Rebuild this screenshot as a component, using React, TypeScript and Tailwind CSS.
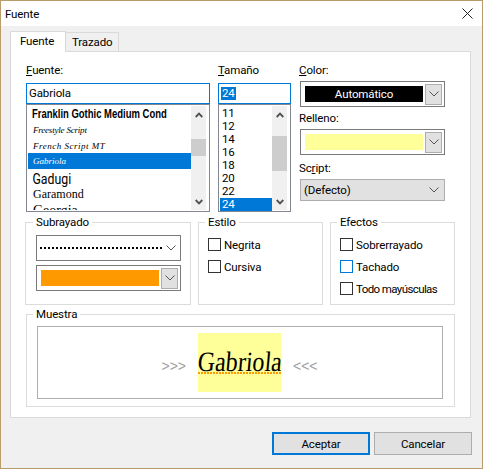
const textFont = "font-['Roboto','Noto_Sans',sans-serif] text-[11.5px] tracking-[-0.12px] leading-[16px] text-black";

function Chevron({ className = "text-[#555]" }: { className?: string }) {
  return (
    <svg width="10" height="6" viewBox="0 0 10 6" className={className} fill="none" stroke="currentColor" strokeWidth="1">
      <path d="M0.5 0.5 L5 5 L9.5 0.5" />
    </svg>
  );
}

function ScrollArrow({ up }: { up?: boolean }) {
  return (
    <div className="h-[17px] flex items-center justify-center">
      <svg width="8" height="6" viewBox="0 0 8 6" fill="none" stroke="#505050" strokeWidth="1.8">
        <path d={up ? "M0.7 5 L4 1.6 L7.3 5" : "M0.7 1 L4 4.4 L7.3 1"} />
      </svg>
    </div>
  );
}

function ScrollBar({ before, thumb }: { before: string; thumb: string }) {
  return (
    <div className="w-[15px] h-full bg-[#f0f0f0] flex flex-col shrink-0">
      <ScrollArrow up />
      <div className="flex-1">
        <div className={`${before} ${thumb} bg-[#cdcdcd]`} />
      </div>
      <ScrollArrow />
    </div>
  );
}

function ColorCombo({ swatch, label }: { swatch: string; label?: string }) {
  return (
    <div className="w-[145px] h-[26px] border border-[#7a7a7a] bg-white flex items-center pl-[4px] pr-[2px] gap-[2px]">
      <div className={`w-[118px] h-[16px] ${swatch} text-white text-center leading-[16px]`}>{label}</div>
      <div className="w-[17px] h-[21px] bg-[#e1e1e1] border border-[#adadad] flex items-center justify-center">
        <Chevron />
      </div>
    </div>
  );
}

function Check({ label, focus, className = "" }: { label: string; focus?: boolean; className?: string }) {
  return (
    <div className="flex items-center h-[13px] gap-[3px]">
      <div className={`w-[13px] h-[13px] border bg-white ${focus ? "border-[#0078d7]" : "border-[#333]"}`} />
      <span className={className}>{label}</span>
    </div>
  );
}

function Group({ title, className, legend = "ml-[6px]", children }: { title: string; className: string; legend?: string; children: React.ReactNode }) {
  return (
    <fieldset className={`border border-[#dcdcdc] shrink-0 ${className}`}>
      <legend className={`${legend} px-[3px] h-[16px] leading-[16px]`}>{title}</legend>
      {children}
    </fieldset>
  );
}

const fonts = [
  { name: "Franklin Gothic Medium Cond", cls: "h-[16px] font-['Liberation_Sans'] font-bold text-[12px] tracking-normal scale-x-[.79] origin-left whitespace-nowrap" },
  { name: "Freestyle Script", cls: "h-[16px] font-['Liberation_Serif'] italic text-[9px] tracking-[-0.2px]" },
  { name: "French Script MT", cls: "h-[15px] font-['Liberation_Serif'] italic text-[9px] tracking-[.5px]" },
  { name: "Gabriola", cls: "h-[16px] font-['Liberation_Serif'] italic text-[9px] tracking-normal text-white", selected: true },
  { name: "Gadugi", cls: "h-[17px] leading-[21px] font-['Roboto'] text-[14px] tracking-normal scale-x-[.88] origin-left" },
  { name: "Garamond", cls: "h-[14px] leading-[14px] font-['Liberation_Serif'] text-[12px] tracking-normal" },
  { name: "Georgia", cls: "h-[16px] leading-[22px] font-['Liberation_Serif'] text-[14px] tracking-normal" },
];

const sizes = ["11", "12", "14", "16", "18", "20", "22", "24"];

export default function App() {
  return (
    <div className={`w-[483px] h-[469px] border border-[#b99c6e] bg-[#f0f0f0] flex flex-col ${textFont}`}>
      <div className="h-[25px] bg-white flex items-center justify-between pl-[4px] pr-[9px]">
        <span>Fuente</span>
        <svg width="11" height="11" viewBox="0 0 11 11" stroke="#222" strokeWidth="1" fill="none">
          <path d="M0.5 0.5 L10.5 10.5 M10.5 0.5 L0.5 10.5" />
        </svg>
      </div>

      <div className="flex-1 pl-[9px] pt-[5px]">
        <div className="flex items-end h-[20px] relative z-10">
          <div className="w-[56px] h-[21px] -mb-px bg-white border border-b-0 border-[#d9d9d9] pl-[9px] pt-[1px]">Fuente</div>
          <div className="w-[53px] h-[19px] bg-[#f0f0f0] border border-l-0 border-b-0 border-[#d9d9d9] pl-[6px] pt-[1px]">Trazado</div>
        </div>

        <div className="w-[461px] h-[367px] bg-white border border-[#d9d9d9] pl-[15px] pt-[10px]">
          <div className="flex">
            <div className="w-[184px] shrink-0">
              <div className="mb-[5px]"><span className="underline">F</span>uente:</div>
              <div className="h-[21px] border border-[#0078d7] pl-[2px] leading-[19px]">Gabriola</div>
              <div className="h-[108px] border border-[#828790] p-[1px] flex overflow-hidden">
                <div className="w-[163px] h-full overflow-hidden shrink-0">
                  {fonts.map((f) => (
                    <div key={f.name} className={`${f.selected ? "bg-[#0078d7]" : ""} pl-[5px] leading-[16px] ${f.cls}`}>{f.name}</div>
                  ))}
                </div>
                <ScrollBar before="mt-[16px]" thumb="h-[17px]" />
              </div>
            </div>

            <div className="w-[73px] ml-[8px] shrink-0">
              <div className="mb-[5px]"><span className="underline">T</span>amaño</div>
              <div className="h-[21px] border border-[#0078d7] pl-[2px] flex items-center">
                <span className="bg-[#0078d7] text-white leading-[13px] px-px">24</span>
              </div>
              <div className="h-[108px] border border-[#828790] p-[1px] flex overflow-hidden">
                <div className="w-[52px] shrink-0 pt-[1px]">
                  {sizes.map((s) => (
                    <div key={s} className={`h-[13px] leading-[13px] pl-[2px] ${s === "24" ? "bg-[#0078d7] text-white h-[14px]" : ""}`}>{s}</div>
                  ))}
                </div>
                <ScrollBar before="mt-[13px]" thumb="h-[35px]" />
              </div>
            </div>

            <div className="w-[146px] ml-[8px] pl-[1px] shrink-0 flex flex-col">
              <div className="mb-[3px] -ml-px"><span className="underline">C</span>olor:</div>
              <ColorCombo swatch="bg-black" label="Automático" />
              <div className="mt-[3px] mb-[3px] -ml-px">Relleno:</div>
              <ColorCombo swatch="bg-[#ffff99]" />
              <div className="mt-[5px] mb-[3px] -ml-px">Sc<span className="underline">r</span>ipt:</div>
              <div className="w-[145px] h-[22px] bg-[#e1e1e1] border border-[#adadad] flex items-center justify-between pl-[3px] pr-[5px]">
                <span>(Defecto)</span>
                <Chevron />
              </div>
            </div>
          </div>

          <div className="flex mt-[2px] -ml-px">
            <Group title="Subrayado" legend="ml-[7px]" className="w-[166px] h-[91px]">
              <div className="pl-[10px] pt-[5px]">
                <div className="w-[145px] h-[26px] border border-[#7a7a7a] bg-white flex items-center pl-[3px] pr-[4px] justify-between">
                  <div className="w-[122px] h-[2px] bg-[repeating-linear-gradient(90deg,#000_0,#000_2px,transparent_2px,transparent_4px)]" />
                  <Chevron />
                </div>
                <div className="mt-[4px]">
                  <ColorCombo swatch="bg-[#ff9900]" />
                </div>
              </div>
            </Group>
            <Group title="Estilo" className="w-[125px] h-[91px] ml-[7px]">
              <div className="flex flex-col gap-[9px] pl-[9px] pt-[8px]">
                <Check label="Negrita" />
                <Check label="Cursiva" />
              </div>
            </Group>
            <Group title="Efectos" className="w-[125px] h-[91px] ml-[7px]">
              <div className="flex flex-col gap-[9px] pl-[9px] pt-[8px]">
                <Check label="Sobrerrayado" />
                <Check label="Tachado" focus />
                <Check label="Todo mayúsculas" className="tracking-[-0.6px]" />
              </div>
            </Group>
          </div>

          <Group title="Muestra" className="w-[429px] h-[101px] mt-[1px]">
            <div className="pl-[10px] pt-[4px]">
              <div className="w-[406px] h-[73px] border border-[#adadad] flex items-center justify-center">
                <div className="flex items-center gap-[12px] text-[#a0a0a0] -ml-[1px]">
                  <span className="mt-[6px] font-['Liberation_Sans'] text-[14px] tracking-normal">&gt;&gt;&gt;</span>
                  <div className="w-[83px] h-[59px] bg-[#ffff99] flex flex-col items-center justify-end pb-[18px] text-black">
                    <span className="font-['Liberation_Serif'] text-[28px] leading-[20px] tracking-normal scale-x-[.86] -skew-x-6 whitespace-nowrap">Gabriola</span>
                    <div className="w-[83px] h-[2px] shrink-0 bg-[repeating-linear-gradient(90deg,#ff9900_0,#ff9900_2px,transparent_2px,transparent_3px)]" />
                  </div>
                  <span className="mt-[6px] font-['Liberation_Sans'] text-[14px] tracking-normal">&lt;&lt;&lt;</span>
                </div>
              </div>
            </div>
          </Group>
        </div>

        <div className="flex justify-end gap-[4px] pr-[10px] mt-[14px]">
          <button className="w-[98px] h-[23px] bg-[#e1e1e1] border-2 border-[#0078d7] leading-[16px]">Aceptar</button>
          <button className="w-[98px] h-[23px] bg-[#e1e1e1] border border-[#adadad] leading-[16px]">Cancelar</button>
        </div>
      </div>
    </div>
  );
}
